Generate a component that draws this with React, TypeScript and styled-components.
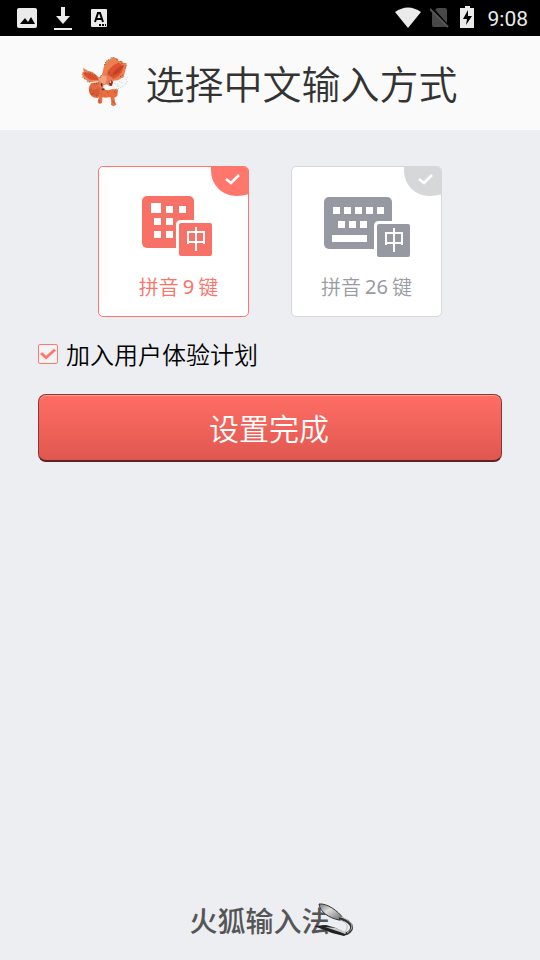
import React, { useState } from "react";
import styled, { createGlobalStyle } from "styled-components";

const GlobalStyle = createGlobalStyle`
  *, *::before, *::after { box-sizing: border-box; }
  body {
    margin: 0;
    background: #edeef2;
    font-family: Roboto, "Noto Sans CJK SC", sans-serif;
  }
`;

const Page = styled.div`
  display: flex;
  flex-direction: column;
  min-height: 100vh;
  background: #edeef2;
`;

const StatusBar = styled.div`
  display: flex;
  align-items: center;
  justify-content: space-between;
  height: 36px;
  padding: 0 12px 0 16px;
  background: #000;
  color: #ebebeb;
`;

const StatusGroup = styled.div<{ $gap: number }>`
  display: flex;
  align-items: center;
  gap: ${(p) => p.$gap}px;
  svg { display: block; }
`;

const Clock = styled.time`
  font-size: 21px;
  line-height: 24px;
  font-weight: 400;
  padding-top: 2px;
`;

const Header = styled.header`
  display: flex;
  align-items: center;
  justify-content: center;
  gap: 16px;
  padding: 17px 2px 19px 0;
  background: #fafafa;
`;

const Title = styled.h1`
  margin: 0;
  color: #333;
  font-family: "Noto Sans CJK SC", sans-serif;
  font-size: 39px;
  font-weight: 350;
  line-height: 58px;
`;

const Main = styled.main`
  display: flex;
  flex: 1;
  flex-direction: column;
  padding: 36px 38px 0;
`;

const Choices = styled.div`
  display: flex;
  justify-content: center;
  gap: 42px;
`;

const HiddenRadio = styled.input`
  position: absolute;
  opacity: 0;
`;

const Card = styled.label<{ $on: boolean }>`
  position: relative;
  display: flex;
  flex-direction: column;
  align-items: center;
  gap: 15px;
  width: 151px;
  height: 151px;
  padding-top: 28px;
  overflow: hidden;
  border: 1px solid ${(p) => (p.$on ? "#ff766d" : "#d6d7d9")};
  border-radius: 5px;
  background: #fff;
  color: ${(p) => (p.$on ? "#fa7268" : "#989ba1")};
  cursor: pointer;
  svg { display: block; }
`;

const Corner = styled.span<{ $on: boolean }>`
  position: absolute;
  top: -1px;
  right: -1px;
  width: 38px;
  height: 30px;
  overflow: hidden;
  color: ${(p) => (p.$on ? "#ff766d" : "#d6d7d9")};
`;

const CardArt = styled.span<{ $inset: number }>`
  padding-left: ${(p) => p.$inset}px;
`;

const CardText = styled.span<{ $inset: number }>`
  display: flex;
  gap: 4px;
  padding-left: ${(p) => p.$inset}px;
  font-family: "Noto Sans CJK SC", sans-serif;
  font-size: 20px;
  font-weight: 350;
  line-height: 30px;
  white-space: nowrap;
`;

const KeyCount = styled.span`
  font-family: "Noto Sans", sans-serif;
  font-weight: 400;
`;

const PlanLabel = styled.label`
  display: flex;
  align-items: center;
  gap: 8px;
  margin-top: 19px;
  color: #000;
  font-family: "Noto Sans CJK SC", sans-serif;
  font-size: 24px;
  font-weight: 350;
  line-height: 36px;
`;

const CheckBox = styled.input`
  appearance: none;
  display: grid;
  place-items: center;
  width: 20px;
  height: 20px;
  margin: 0;
  border: 1px solid #ff7a70;
  border-radius: 2px;
  background: #f4f3f5;

  &:checked::before {
    content: "";
    width: 16px;
    height: 12px;
    background: #ff766d;
    clip-path: polygon(0 50%, 15% 35%, 38% 65%, 87% 6%, 100% 20%, 38% 96%);
  }
`;

const Submit = styled.button`
  width: 100%;
  height: 68px;
  margin-top: 22px;
  padding: 0 2px 2px 0;
  border: 1px solid #8f3434;
  border-bottom: 2px solid #5c2226;
  border-radius: 8px;
  background: linear-gradient(#ff6e65, #e05750);
  box-shadow: inset 0 1px 0 #f7a09b;
  color: #fff;
  font-family: "Noto Sans CJK SC", sans-serif;
  font-size: 30px;
  font-weight: 350;
  line-height: 44px;
  cursor: pointer;
`;

const Footer = styled.footer`
  display: flex;
  align-items: center;
  justify-content: center;
  padding: 0 0 20px 5px;
`;

const Brand = styled.span`
  color: #555;
  font-family: "Noto Sans CJK SC", sans-serif;
  font-size: 28px;
  font-weight: 500;
  line-height: 40px;
`;

const Quill = styled.svg`
  display: block;
  margin-left: -16px;
`;

const FoxLogo = () => (
  <svg width="49" height="50" viewBox="30 24 147 150" aria-hidden="true">
    <path d="M88 99l-25 4-7 14 3 17 10 11 14 2 19-11 3-22z" fill="#e5693e" />
    <path d="M57 124l6 14 18 4 11-12-7-12-14 5z" fill="#d85a35" />
    <path d="M85 97l-26 3-16-10-8-15 6-5-2-14 13 9 16 4 18 15 6 12z" fill="#ed8453" />
    <path d="M86 93l-26-1-18-14 2-9 22 5 15 10z" fill="#d94e2c" />
    <path d="M95 81l8-34 11-14 18-8 13 5-1 6 12-1 3 6 11 1-3 18-6 24-18 14-26-4-12-13z" fill="#ec8051" />
    <path d="M110 82l4-17 17-17 15-7 16 10-7 19-9 11-14 8-20 1z" fill="#df522f" />
    <path d="M127 73l19-19 16-5-15 23-16 7z" fill="#c94128" />
    <path d="M89 127l-3 20-3 12 4 5 9-2 1-17 10 1 14-2 3 14-1 9 7 5 9-5-4-9-2-12 9-5 2-19-13-10z" fill="#e96d3e" />
    <path d="M85 92l8-13 15-5 18 10 6 14-3 17-15 9-18-4-11-11z" fill="#ed7950" />
    <path d="M88 85l10-7 11 4 2 9-6 14-9-2-10-9z" fill="#f3a07f" />
    <path d="M100 109l10-3 10 6 12-2-3 10-15 4-14-3z" fill="#f9f9f6" />
    <path d="M130 95l14-1 11-7 17-3-4 9 4 6-9 10-14 9-17 3-16-8 9-6z" fill="#f6f8f6" />
    <path d="M172 84l-4 9 4 6-9 10-14 9-17 3M134 104l9 3M148 97l9 5M143 112l7-2" fill="none" stroke="#c3cfce" strokeWidth="3" strokeDasharray="3 4" />
    <path d="M116 98l8-4 5 5-3 12-7-1z" fill="#a93325" />
    <path d="M119 97h4v4h-4z" fill="#fff" />
    <path d="M119 103h5v4h-5zM92 105l4-4 2 10-4 2zM94 119l9-1 1 5-7 1z" fill="#453534" />
    <path d="M49 62l3 3M38 71l8 3M55 69l12 5M72 75l9 9M37 84l8 6M52 98l8 1M72 105l14-2M104 48l3-10 9-6M122 27l10-2M140 31l5 6M152 37l5 8M169 49l-3 10M158 78l-10 7M131 79l-13 2M94 79l-5 9M59 123l7-3M65 137l7-5M78 142l7-4M93 134l4 4M112 130l5 4M132 127l7 5M129 155l5 9M88 154l2 9M116 77l3-9M142 63l-7 11" fill="none" stroke="#70513d" strokeWidth="3" strokeDasharray="3 3" />
  </svg>
);

const CornerTick = ({ on }: { on: boolean }) => (
  <Corner $on={on}>
    <svg width="38" height="30" viewBox="0 0 38 30" aria-hidden="true">
      <path d="M0 0h38v28c-4 1-8 2-12 2C11 30 0 19 0 4z" fill="currentColor" />
      <path d="M15 13l5 4 8-8" fill="none" stroke="#fff" strokeWidth="2.5" />
    </svg>
  </Corner>
);

const MiddleTile = ({ x, y, color }: { x: number; y: number; color: string }) => (
  <g transform={`translate(${x} ${y})`}>
    <path d="M-3 36V2q0-5 5-5h34v39z" fill="#fff" />
    <rect width="33" height="33" rx="2" fill={color} />
    <path d="M9 21V9h16v12M9 19h16M17 4v24" fill="none" stroke="#fff" strokeWidth="2" />
  </g>
);

const NineKeyArt = () => (
  <svg width="70" height="62" viewBox="0 0 70 62" aria-hidden="true">
    <rect y="1" width="52" height="52" rx="5" fill="#f87167" />
    <path d="M9 8h10v10H9zM24 11h7v7h-7zM37 11h7v7h-7zM12 23h7v7h-7zM24 23h7v7h-7zM12 36h7v7h-7zM24 36h7v7h-7z" fill="#fff" />
    <MiddleTile x={37} y={28} color="#f87167" />
  </svg>
);

const FullKeyArt = () => (
  <svg width="86" height="62" viewBox="0 0 86 62" aria-hidden="true">
    <rect y="2" width="68" height="52" rx="5" fill="#9699a1" />
    <path d="M9 12h7v7H9zM20 12h7v7h-7zM31 12h7v7h-7zM42 12h7v7h-7zM53 12h7v7h-7zM14 26h7v7h-7zM25 26h7v7h-7zM36 26h7v7h-7zM8 40h35v7H8z" fill="#fff" />
    <MiddleTile x={53} y={29} color="#9699a1" />
  </svg>
);

export default function App() {
  const [mode, setMode] = useState("nine");
  const [joined, setJoined] = useState(true);
  const nine = mode === "nine";

  return (
    <Page>
      <GlobalStyle />
      <StatusBar>
        <StatusGroup $gap={17}>
          <svg width="21" height="20" viewBox="0 0 21 20" aria-hidden="true">
            <rect x="1" width="20" height="20" rx="2" fill="#ebebeb" />
            <path d="M4 16l5-6 3 4 3-5 4 7z" fill="#000" />
          </svg>
          <svg width="18" height="24" viewBox="0 0 18 24" aria-hidden="true">
            <path d="M7 1h4v9h5l-7 8-7-8h5zM0 22h18v2H0z" fill="#ebebeb" />
          </svg>
          <svg width="18" height="20" viewBox="0 0 18 20" aria-hidden="true">
            <rect x="2" y="1" width="16" height="18" rx="1" fill="#ebebeb" />
            <path d="M6 14l3-9h2l3 9M7 11h6" fill="none" stroke="#000" strokeWidth="2" />
            <path d="M10 16h2v2h-2zM13 16h2v2h-2zM16 16h1v2h-1z" fill="#000" />
          </svg>
        </StatusGroup>
        <StatusGroup $gap={9}>
          <svg width="26" height="22" viewBox="0 0 26 22" aria-hidden="true">
            <path d="M0 5Q13-4 26 5L13 21z" fill="#ebebeb" />
          </svg>
          <svg width="20" height="22" viewBox="0 0 20 22" aria-hidden="true">
            <path d="M7 1h8q2 0 2 2v15q0 2-2 2H4q-2 0-2-2V6z" fill="#484848" />
            <path d="M2 1l18 20" stroke="#000" strokeWidth="2" />
            <path d="M0 2l18 18" stroke="#555" strokeWidth="2" />
          </svg>
          <StatusGroup $gap={11}>
            <svg width="18" height="24" viewBox="0 0 18 24" aria-hidden="true">
              <path d="M6 0h5v2h4v20H1V2h5z" fill="#ebebeb" />
              <path d="M9 4L4 13h4l-1 6 6-9H9z" fill="#000" />
            </svg>
            <Clock>9:08</Clock>
          </StatusGroup>
        </StatusGroup>
      </StatusBar>

      <Header>
        <FoxLogo />
        <Title>选择中文输入方式</Title>
      </Header>

      <Main>
        <Choices role="radiogroup" aria-label="选择中文输入方式">
          <Card $on={nine}>
            <HiddenRadio type="radio" name="mode" checked={nine} onChange={() => setMode("nine")} />
            <CornerTick on={nine} />
            <CardArt $inset={6}><NineKeyArt /></CardArt>
            <CardText $inset={10}>
              拼音<KeyCount>9</KeyCount>键
            </CardText>
          </Card>
          <Card $on={!nine}>
            <HiddenRadio type="radio" name="mode" checked={!nine} onChange={() => setMode("full")} />
            <CornerTick on={!nine} />
            <CardArt $inset={0}><FullKeyArt /></CardArt>
            <CardText $inset={0}>
              拼音<KeyCount>26</KeyCount>键
            </CardText>
          </Card>
        </Choices>
        <PlanLabel>
          <CheckBox type="checkbox" checked={joined} onChange={(e) => setJoined(e.target.checked)} />
          加入用户体验计划
        </PlanLabel>
        <Submit type="button">设置完成</Submit>
      </Main>

      <Footer>
        <Brand>火狐输入法</Brand>
        <Quill width="42" height="34" viewBox="0 0 42 34" aria-hidden="true">
          <defs>
            <linearGradient id="quill" x1="0" y1="0" x2="1" y2="1">
              <stop offset="0" stopColor="#777" />
              <stop offset="0.4" stopColor="#ddd" />
              <stop offset="1" stopColor="#666" />
            </linearGradient>
          </defs>
          <path d="M0 23l12-1 10 3 12 6-4 2-12-3z" fill="#222" />
          <path d="M11 24l15 5 5 2 3-1-12-5z" fill="#c9c9c9" />
          <path d="M5 1c8-1 19 7 24 14l-4 2C15 15 6 9 5 1z" fill="url(#quill)" stroke="#333" strokeWidth="1" />
          <path d="M25 16c7 0 10 3 12 6 2 4-1 7-5 9" fill="none" stroke="#333" strokeWidth="3" />
          <path d="M27 14c6 2 11 6 11 9 0 3-2 5-5 7M26 17c8 3 9 7 5 12" fill="none" stroke="#bbb" strokeWidth="1" />
        </Quill>
      </Footer>
    </Page>
  );
}
